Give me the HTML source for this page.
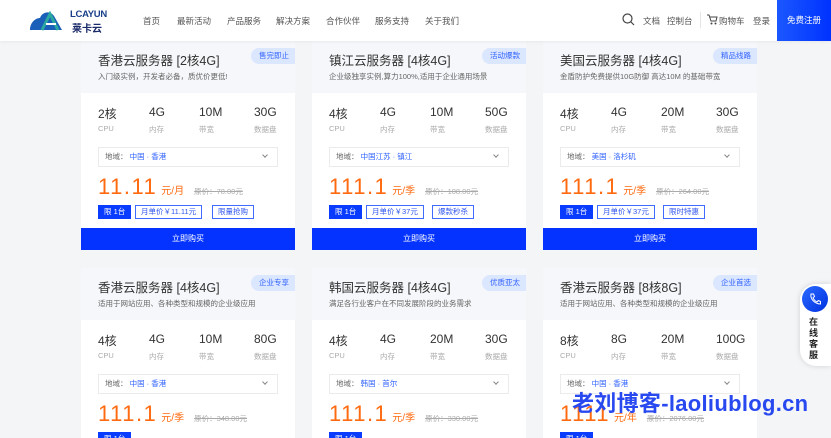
<!DOCTYPE html>
<html style="width:831px;height:438px;overflow:hidden"><head><meta charset="utf-8"><style>
*{margin:0;padding:0;box-sizing:border-box}
body{width:831px;height:438px;overflow:hidden;background:#f4f5f7;font-family:"Liberation Sans","Noto Sans CJK SC",sans-serif;position:relative;color:#333}
.hdr{position:absolute;left:0;top:0;width:831px;height:41px;background:#fff;box-shadow:0 1px 3px rgba(0,0,0,.06);z-index:5}
.nav{position:absolute;top:15px;font-size:8.5px;color:#555}
.reg{position:absolute;right:0;top:0;width:54px;height:41px;background:linear-gradient(90deg,#1b57ff,#0033ff);color:#fff;font-size:8.5px;line-height:41px;text-align:center}
.card{position:absolute;width:214px;height:209px;background:#fff}
.ch{position:absolute;left:0;top:0;width:214px;height:52px;background:#f6f7fa}
.t{position:absolute;left:17px;top:9px;font-size:12.5px;color:#333}
.d{position:absolute;left:17px;top:30px;font-size:7.5px;color:#666}
.b{position:absolute;right:0;top:7px;height:16px;padding:0 6px 0 8px;border-radius:8px 0 0 8px;background:#dbe6ff;color:#2f62ff;font-size:7.5px;line-height:16px}
.sv{position:absolute;top:64px;font-size:12px;color:#333}
.sl{position:absolute;top:83px;font-size:7.5px;color:#aaa}
.rg{position:absolute;left:17px;top:106px;width:180px;height:20px;border:1px solid #ebebeb;font-size:7.5px;line-height:18px;padding-left:6px;color:#666}
.rg span{color:#2f62ff}
.rg i{position:absolute;right:10px;top:5px;width:4px;height:4px;border-right:1px solid #888;border-bottom:1px solid #888;transform:rotate(45deg)}
.p{position:absolute;left:17px;top:133px;font-size:22px;color:#ff6a10;letter-spacing:1.5px}
.p small{font-size:10px;letter-spacing:0;margin-left:4px}
.p s{font-size:7.5px;color:#aaa;letter-spacing:0;margin-left:10px}
.tg{position:absolute;top:164px;height:14px;font-size:7.5px;line-height:12px;border:1px solid #3f6bff;color:#2f55ee;padding:0 5px}
.tg.f{background:#0a3cff;color:#fff;border-color:#0a3cff}
.btn{position:absolute;left:0;top:187px;width:214px;height:22px;background:#0433ff;color:#fff;font-size:8px;line-height:22px;text-align:center}
.wm{position:absolute;left:572px;top:386px;font-size:22px;font-weight:bold;color:#2848f0;letter-spacing:0.3px;z-index:6;white-space:nowrap}
.kf{position:absolute;left:800px;top:284px;width:31px;height:82px;background:#fff;border-radius:16px 0 0 16px;box-shadow:0 0 6px rgba(0,0,0,.15);z-index:6}
</style></head><body>
<div class="hdr">
<svg style="position:absolute;left:28px;top:8px" width="40" height="24" viewBox="0 0 40 24"><path d="M2 22 C2 14 8 10 12 10 C14 4 22 2 26 8 L34 22Z" fill="#1a5fb8"/><path d="M14 22 L22 6 L30 22" fill="none" stroke="#2ba8a0" stroke-width="3"/><path d="M18 16 L28 16" stroke="#fff" stroke-width="2"/></svg>
<div style="position:absolute;left:70px;top:9px;font-size:9.5px;font-weight:bold;color:#1a3f8a;letter-spacing:-.3px">LCAYUN</div>
<div style="position:absolute;left:72px;top:20px;font-size:10px;font-weight:bold;color:#1a2a6a">莱卡云</div>
<div class="nav" style="left:143px">首页</div>
<div class="nav" style="left:177px">最新活动</div>
<div class="nav" style="left:227px">产品服务</div>
<div class="nav" style="left:276px">解决方案</div>
<div class="nav" style="left:326px">合作伙伴</div>
<div class="nav" style="left:375px">服务支持</div>
<div class="nav" style="left:425px">关于我们</div>
<svg style="position:absolute;left:622px;top:13px" width="13" height="13"><circle cx="5.5" cy="5.5" r="4.5" fill="none" stroke="#444" stroke-width="1.2"/><path d="M9 9 L12 12" stroke="#444" stroke-width="1.2"/></svg>
<div class="nav" style="left:643px">文档</div>
<div class="nav" style="left:667px">控制台</div>
<div style="position:absolute;left:700px;top:12px;width:1px;height:16px;background:#e5e5e5"></div>
<svg style="position:absolute;left:706px;top:13px" width="12" height="12"><path d="M1 2 H3 L5 8 H10 L11 4 H4" fill="none" stroke="#444" stroke-width="1"/><circle cx="5.5" cy="10.5" r="1" fill="#444"/><circle cx="9.5" cy="10.5" r="1" fill="#444"/></svg>
<div class="nav" style="left:719px">购物车</div>
<div class="nav" style="left:753px">登录</div>
<div class="reg">免费注册</div>
</div>

<div class="card" style="left:81px;top:41px">
<div class="ch"></div><div class="t">香港云服务器 [2核4G]</div><div class="d">入门级实例，开发者必备，质优价更低!</div><div class="b">售完即止</div>
<div class="sv" style="left:17px">2核</div><div class="sv" style="left:68px">4G</div><div class="sv" style="left:118px">10M</div><div class="sv" style="left:173px">30G</div>
<div class="sl" style="left:17px">CPU</div><div class="sl" style="left:68px">内存</div><div class="sl" style="left:118px">带宽</div><div class="sl" style="left:173px">数据盘</div>
<div class="rg">地域：&nbsp;<span>中国 · 香港</span><i></i></div>
<div class="p">11.11<small>元/月</small><s>原价：78.00元</s></div>
<div class="tg f" style="left:17px">限 1台</div><div class="tg" style="left:54px">月单价￥11.11元</div><div class="tg" style="left:131px">限量抢购</div>
<div class="btn">立即购买</div></div>

<div class="card" style="left:312px;top:41px">
<div class="ch"></div><div class="t">镇江云服务器 [4核4G]</div><div class="d">企业级独享实例,算力100%,适用于企业通用场景</div><div class="b">活动爆款</div>
<div class="sv" style="left:17px">4核</div><div class="sv" style="left:68px">4G</div><div class="sv" style="left:118px">10M</div><div class="sv" style="left:173px">50G</div>
<div class="sl" style="left:17px">CPU</div><div class="sl" style="left:68px">内存</div><div class="sl" style="left:118px">带宽</div><div class="sl" style="left:173px">数据盘</div>
<div class="rg">地域：&nbsp;<span>中国江苏 · 镇江</span><i></i></div>
<div class="p">111.1<small>元/季</small><s>原价：108.00元</s></div>
<div class="tg f" style="left:17px">限 1台</div><div class="tg" style="left:54px">月单价￥37元</div><div class="tg" style="left:120px">爆款秒杀</div>
<div class="btn">立即购买</div></div>

<div class="card" style="left:543px;top:41px">
<div class="ch"></div><div class="t">美国云服务器 [4核4G]</div><div class="d">金盾防护免费提供10G防御 高达10M 的基础带宽</div><div class="b">精品线路</div>
<div class="sv" style="left:17px">4核</div><div class="sv" style="left:68px">4G</div><div class="sv" style="left:118px">20M</div><div class="sv" style="left:173px">30G</div>
<div class="sl" style="left:17px">CPU</div><div class="sl" style="left:68px">内存</div><div class="sl" style="left:118px">带宽</div><div class="sl" style="left:173px">数据盘</div>
<div class="rg">地域：&nbsp;<span>美国 · 洛杉矶</span><i></i></div>
<div class="p">111.1<small>元/季</small><s>原价：264.00元</s></div>
<div class="tg f" style="left:17px">限 1台</div><div class="tg" style="left:54px">月单价￥37元</div><div class="tg" style="left:120px">限时特惠</div>
<div class="btn">立即购买</div></div>

<div class="card" style="left:81px;top:268px;height:170px">
<div class="ch"></div><div class="t">香港云服务器 [4核4G]</div><div class="d">适用于网站应用、各种类型和规模的企业级应用</div><div class="b">企业专享</div>
<div class="sv" style="left:17px">4核</div><div class="sv" style="left:68px">4G</div><div class="sv" style="left:118px">10M</div><div class="sv" style="left:173px">80G</div>
<div class="sl" style="left:17px">CPU</div><div class="sl" style="left:68px">内存</div><div class="sl" style="left:118px">带宽</div><div class="sl" style="left:173px">数据盘</div>
<div class="rg">地域：&nbsp;<span>中国 · 香港</span><i></i></div>
<div class="p">111.1<small>元/季</small><s>原价：348.00元</s></div>
<div class="tg f" style="left:17px">限 1台</div></div>

<div class="card" style="left:312px;top:268px;height:170px">
<div class="ch"></div><div class="t">韩国云服务器 [4核4G]</div><div class="d">满足各行业客户在不同发展阶段的业务需求</div><div class="b">优质亚太</div>
<div class="sv" style="left:17px">4核</div><div class="sv" style="left:68px">4G</div><div class="sv" style="left:118px">20M</div><div class="sv" style="left:173px">30G</div>
<div class="sl" style="left:17px">CPU</div><div class="sl" style="left:68px">内存</div><div class="sl" style="left:118px">带宽</div><div class="sl" style="left:173px">数据盘</div>
<div class="rg">地域：&nbsp;<span>韩国 · 首尔</span><i></i></div>
<div class="p">111.1<small>元/季</small><s>原价：330.00元</s></div>
<div class="tg f" style="left:17px">限 1台</div></div>

<div class="card" style="left:543px;top:268px;height:170px">
<div class="ch"></div><div class="t">香港云服务器 [8核8G]</div><div class="d">适用于网站应用、各种类型和规模的企业级应用</div><div class="b">企业首选</div>
<div class="sv" style="left:17px">8核</div><div class="sv" style="left:68px">8G</div><div class="sv" style="left:118px">20M</div><div class="sv" style="left:173px">100G</div>
<div class="sl" style="left:17px">CPU</div><div class="sl" style="left:68px">内存</div><div class="sl" style="left:118px">带宽</div><div class="sl" style="left:173px">数据盘</div>
<div class="rg">地域：&nbsp;<span>中国 · 香港</span><i></i></div>
<div class="p">1111<small>元/年</small><s>原价：2076.00元</s></div>
<div class="tg f" style="left:17px">限 1台</div></div>

<div class="kf">
<div style="position:absolute;left:2px;top:2px;width:26px;height:26px;border-radius:50%;background:linear-gradient(135deg,#2a6bff,#0030e0)"></div>
<svg style="position:absolute;left:9px;top:9px" width="12" height="12"><path d="M2 1 L4.5 1 L5.5 3.5 L4 4.8 C5 7 6 8 8 9 L9.3 7.5 L11.5 8.5 L11.5 11 C6 11 1 6 2 1Z" fill="none" stroke="#fff" stroke-width="1"/></svg>
<div style="position:absolute;left:9px;top:33px;width:12px;font-size:9px;font-weight:bold;line-height:11px;color:#222">在线客服</div>
</div>
<div class="wm">老刘博客-laoliublog.cn</div>
</body></html>
